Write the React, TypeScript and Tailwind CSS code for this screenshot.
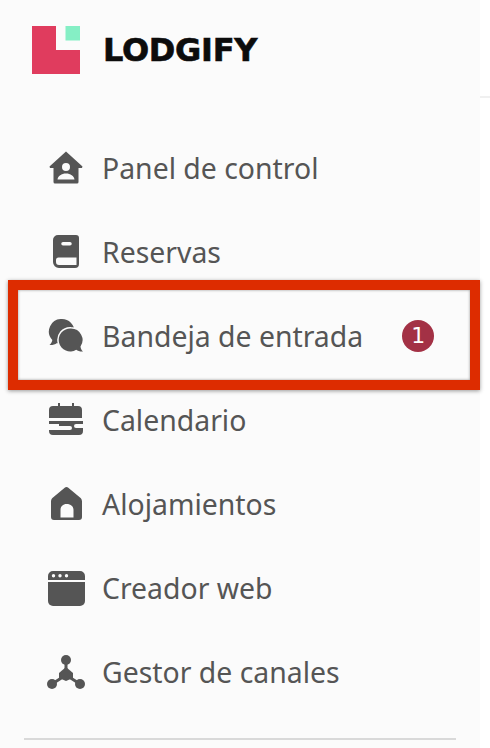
const font = "[font-family:'Noto_Sans',sans-serif]"

function HomeIcon() {
  return (
    <svg width="36" height="36" viewBox="0 0 36 36" fill="#555">
      <path fillRule="evenodd" d="M18 1.500 34.500 16.500 34 18H30.500V32a1.500 1.500 0 0 1-1.500 1.500H7A1.500 1.500 0 0 1 5.500 32V18H2L1.500 16.500ZM18 13a4 4 0 1 0 0 8 4 4 0 0 0 0-8ZM9.500 29.500h17c-.5-3.500-4-6-8.500-6s-8 2.500-8.500 6Z" />
    </svg>
  )
}

function BookIcon() {
  return (
    <svg width="27" height="34" viewBox="0 0 27 34" fill="#555">
      <path fillRule="evenodd" d="M5 0H23a3 3 0 0 1 3 3V29a4 4 0 0 1-4 4H6a6 6 0 0 1-6-6V5a5 5 0 0 1 5-5ZM10 7a1.500 1.500 0 0 0 0 3.500H17a1.500 1.500 0 0 0 0-3.500ZM5.500 22.500a2.500 2.500 0 0 0-2.500 2.500V27a3 3 0 0 0 3 3H23.500V22.500Z" />
    </svg>
  )
}

function ChatIcon() {
  return (
    <svg width="36" height="34" viewBox="0 0 36 34" fill="#555">
      <path d="M14 0a12.500 12.500 0 0 1 0 25c-2 0-3.500-.4-5-1-2 1.500-4.500 2.200-7.500 2 1.500-1.200 2.500-3 2.800-5A12.500 12.500 0 0 1 14 0Z" />
      <path stroke="#fbfbfb" strokeWidth="3" paintOrder="stroke" d="M23 9.500a11.500 11.500 0 0 1 9.500 18c.2 2 1 3.700 2.500 5-2.500.3-5-.4-6.800-1.700A11.500 11.500 0 1 1 23 9.500Z" />
    </svg>
  )
}

function CalendarIcon() {
  return (
    <svg width="34" height="34" viewBox="0 0 34 34" fill="#555">
      <path d="M9 0h2v3h12V0h2v3h4a4 4 0 0 1 4 4v8H0V7a4 4 0 0 1 4-4h5Z" />
      <path d="M0 18H34V21H27a2 2 0 0 0 0 4h7V28a4 4 0 0 1-4 4H4a4 4 0 0 1-4-4V27H21a2 2 0 0 0 0-4H10V21H0Z" />
    </svg>
  )
}

function CabinIcon() {
  return (
    <svg width="31" height="34" viewBox="0 0 31 34" fill="#555">
      <path fillRule="evenodd" d="M15.500 0c.7 0 1.300.3 1.800.7L29 10.500c1.300 1 2 2.500 2 4V30a3 3 0 0 1-3 3H3a3 3 0 0 1-3-3V14.500c0-1.500.7-3 2-4L13.700.7c.5-.4 1.100-.7 1.800-.7ZM15.500 17c-3.500 0-6 2.500-6 6v7.500h13V23c0-3.500-2.500-6-7-6Z" />
    </svg>
  )
}

function BrowserIcon() {
  return (
    <svg width="37" height="37" viewBox="0 0 37 37" fill="#555">
      <path d="M0 12H37V31a5 5 0 0 1-5 5H5a5 5 0 0 1-5-5Z" />
      <path fillRule="evenodd" d="M5 1H32a5 5 0 0 1 5 5V10H0V6a5 5 0 0 1 5-5ZM5.500 4a1.700 1.700 0 1 0 0 3.400 1.700 1.700 0 0 0 0-3.400ZM12 4a1.700 1.700 0 1 0 0 3.400A1.700 1.700 0 0 0 12 4ZM18.500 4a1.700 1.700 0 1 0 0 3.400 1.700 1.700 0 0 0 0-3.400Z" />
    </svg>
  )
}

function NetworkIcon() {
  return (
    <svg width="38" height="34" viewBox="0 0 38 34" fill="#555" stroke="#555">
      <path strokeWidth="3" d="M19 5V20M5 29 19 20 33 29" fill="none" />
      <circle cx="19" cy="5" r="5" stroke="none" />
      <circle cx="5" cy="29" r="5" stroke="none" />
      <circle cx="33" cy="29" r="5" stroke="none" />
      <path stroke="none" d="M19 12 26 18 26 23 19 26 12 23 12 18Z" />
    </svg>
  )
}

const items = [
  { label: 'Panel de control', icon: <HomeIcon /> },
  { label: 'Reservas', icon: <BookIcon /> },
  { label: 'Bandeja de entrada', icon: <ChatIcon />, badge: 1, active: true },
  { label: 'Calendario', icon: <CalendarIcon /> },
  { label: 'Alojamientos', icon: <CabinIcon /> },
  { label: 'Creador web', icon: <BrowserIcon /> },
  { label: 'Gestor de canales', icon: <NetworkIcon /> },
]

export default function App() {
  return (
    <div className={`h-[748px] w-[490px] overflow-hidden bg-white flex ${font}`}>
      <aside className="w-[480px] h-full bg-[#fbfbfb] flex flex-col">
        {/* Logo */}
        <div className="h-[126px] pl-[32px] pt-[26px]">
          <div className="flex items-center gap-[23px]">
            <svg width="48" height="48" viewBox="0 0 48 48">
              <path d="M0 0H24V24H48V48H0Z" fill="#e03c5e" />
              <rect x="33.500" y="0" width="14.500" height="14.500" fill="#85efc5" />
            </svg>
            <span className="font-['DejaVu_Sans',sans-serif] font-bold text-[32px] leading-none tracking-[-0.3px] [-webkit-text-stroke:0.6px_#0c0c0c] text-[#0c0c0c]">LODGIFY</span>
          </div>
        </div>

        {/* Nav */}
        <nav className="relative flex flex-col">
          {items.map(item => (
            <div key={item.label} className="relative h-[84px] flex items-center text-[#555]">
              {item.active && (
                <div className="absolute left-[8px] w-[472px] top-[-14px] h-[110px] border-[10px] border-[#dd2c00] shadow-[0_1px_4px_rgba(0,0,0,0.4),inset_0_0_3px_rgba(0,0,0,0.4)]" />
              )}
              <div className="w-[38px] ml-[47px] mr-[17px] flex justify-center items-center">{item.icon}</div>
              <span className="text-[28.4px] leading-none">{item.label}</span>
              {item.badge && (
                <span className="ml-[39px] w-[32px] h-[32px] rounded-full bg-[#a33145] text-white font-['DejaVu_Sans',sans-serif] text-[22px] leading-none flex items-center justify-center">
                  {item.badge}
                </span>
              )}
            </div>
          ))}
        </nav>

        <div className="mt-auto mb-[8px] mx-[24px] h-[2px] bg-[#d9d9d9]" />
      </aside>
      <div className="flex-1 pt-[96px]">
        <div className="h-[2px] bg-[#f0f0f0]" />
      </div>
    </div>
  )
}
